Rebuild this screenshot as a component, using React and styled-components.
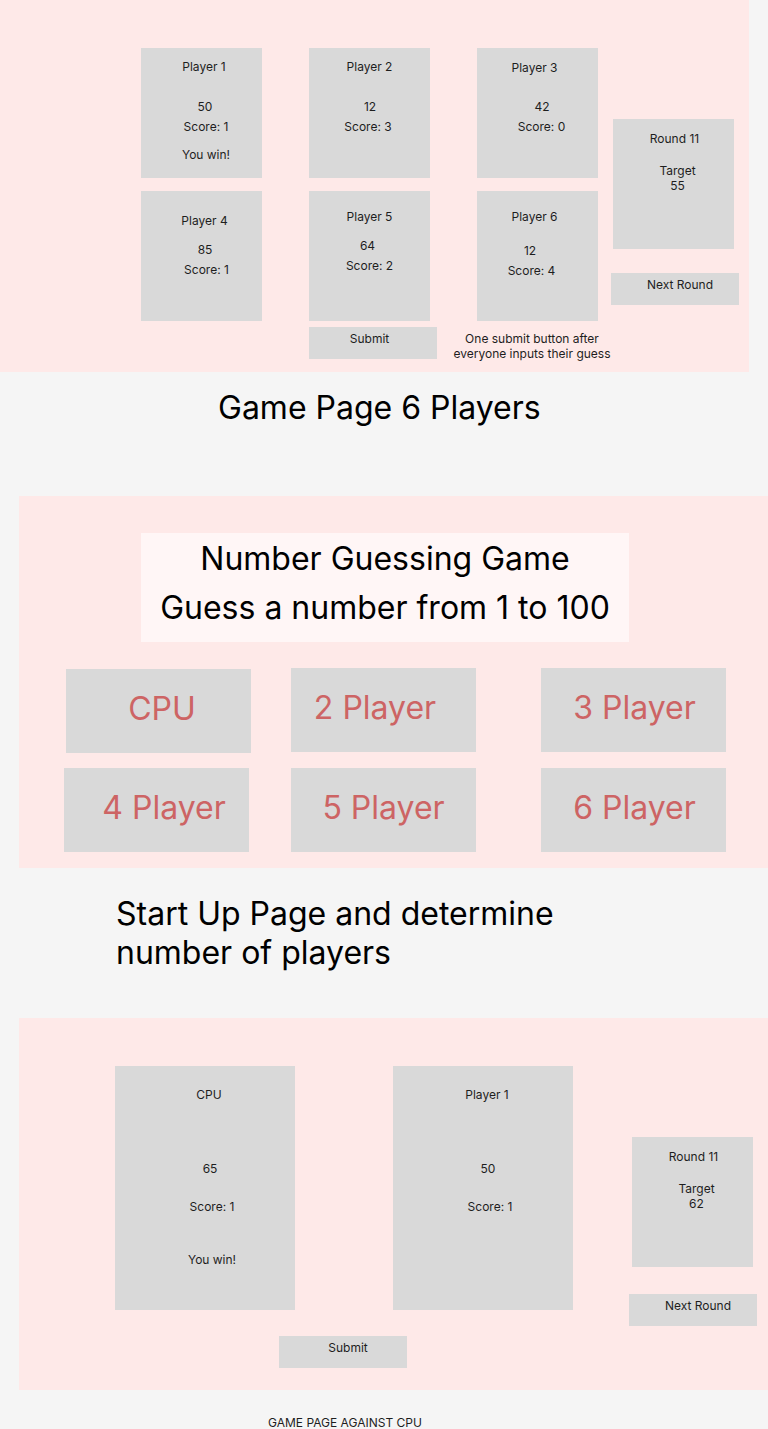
import React from "react";
import styled, { createGlobalStyle } from "styled-components";

const Global = createGlobalStyle`
  html, body { margin: 0; padding: 0; }
  body {
    background: #f5f5f5;
    font-family: Inter, "Noto Sans", sans-serif;
    color: #1e1e1e;
    overflow-x: hidden;
  }
`;

const shiftPad = (dx) =>
  `${dx < 0 ? -dx * 2 : 0}px 0 ${dx > 0 ? dx * 2 : 0}px`;

const Canvas = styled.div`
  width: 768px;
  display: flex;
  flex-direction: column;
`;

const Frame = styled.section`
  box-sizing: border-box;
  width: 749px;
  height: 372px;
  margin: ${(p) => p.$mt || 0}px 0 0 ${(p) => p.$ml || 0}px;
  background: #fee9e8;
  display: flex;
  flex-direction: ${(p) => p.$dir || "row"};
  align-items: flex-start;
  padding: ${(p) => p.$pad};
`;

const Caption = styled.h2`
  margin: ${(p) => p.$mt}px 0 0 ${(p) => p.$ml}px;
  font-weight: 400;
  font-size: 32px;
  line-height: 39px;
  color: #000;
`;

const SmallCaption = styled.div`
  margin: ${(p) => p.$mt}px 0 0 ${(p) => p.$ml}px;
  font-size: 12px;
  line-height: 15px;
  color: #1e1e1e;
  text-transform: uppercase;
  white-space: nowrap;
`;

const Board = styled.div`
  width: 457px;
  flex-shrink: 0;
  display: flex;
  flex-direction: column;
`;

const CardRow = styled.div`
  display: flex;
  gap: 47px;
  margin-top: ${(p) => p.$mt || 0}px;
`;

const FooterRow = styled.div`
  display: flex;
  align-items: flex-start;
  margin-top: ${(p) => p.$mt || 0}px;
`;

const Side = styled.div`
  display: flex;
  flex-direction: column;
  align-items: flex-start;
  margin-left: ${(p) => p.$ml}px;
`;

const Card = styled.div`
  box-sizing: border-box;
  width: ${(p) => p.$w}px;
  height: ${(p) => p.$h}px;
  margin-top: ${(p) => p.$mt || 0}px;
  margin-left: ${(p) => p.$ml || 0}px;
  flex-shrink: 0;
  background: #d9d9d9;
  display: flex;
  flex-direction: column;
  align-items: center;
`;

const Line = styled.div`
  font-size: 12px;
  line-height: 15px;
  white-space: nowrap;
  margin-top: ${(p) => p.$mt}px;
  margin-left: ${(p) => p.$dx * 2}px;
`;

const ActionButton = styled.button`
  box-sizing: border-box;
  width: 128px;
  height: 32px;
  margin: ${(p) => p.$mt || 0}px 0 0 ${(p) => p.$ml || 0}px;
  padding: 4px ${(p) => shiftPad(p.$dx)};
  border: none;
  border-radius: 0;
  background: #d9d9d9;
  font-family: inherit;
  font-size: 12px;
  line-height: 15px;
  color: #1e1e1e;
  display: flex;
  justify-content: center;
  align-items: flex-start;
  flex-shrink: 0;
  white-space: nowrap;
`;

const Note = styled.div`
  width: 170px;
  flex-shrink: 0;
  margin-left: ${(p) => p.$ml}px;
  padding-top: 4px;
  font-size: 12px;
  line-height: 15px;
  text-align: center;
  color: #1e1e1e;
  white-space: nowrap;
`;

const TitleBox = styled.div`
  box-sizing: border-box;
  width: 488px;
  height: 109px;
  margin: 37px 0 0 122px;
  padding-top: 1px;
  background: #fff6f6;
  font-size: 32px;
  line-height: 49px;
  text-align: center;
  color: #000;
`;

const ChoiceRow = styled.div`
  display: flex;
  align-items: flex-start;
  margin-top: ${(p) => p.$mt}px;
`;

const Choice = styled.button`
  box-sizing: border-box;
  width: 185px;
  height: 84px;
  margin: ${(p) => p.$mt || 0}px 0 0 ${(p) => p.$ml}px;
  padding: 0 ${(p) => shiftPad(p.$dx)};
  padding-bottom: 5px;
  border: none;
  border-radius: 0;
  background: #d9d9d9;
  font-family: inherit;
  font-size: 32px;
  color: #cd6464;
  display: flex;
  align-items: center;
  justify-content: center;
  white-space: nowrap;
  flex-shrink: 0;
`;

const TopRow = styled.div`
  display: flex;
  align-items: flex-start;
`;

function Lines({ items }) {
  let prev = null;
  return items.map(([text, y, dx], i) => {
    const mt = prev === null ? y - 7.5 : y - prev - 15;
    prev = y;
    return (
      <Line key={i} $mt={mt} $dx={dx}>
        {text}
      </Line>
    );
  });
}

const rowOne = [
  [["Player 1", 18.7, 2.5], ["50", 58.7, 3.5], ["Score: 1", 78.7, 4.5], ["You win!", 107, 4.5]],
  [["Player 2", 18.7, 0], ["12", 58.7, 0.5], ["Score: 3", 78.7, -1.5]],
  [["Player 3", 19.7, -3], ["42", 59, 4.5], ["Score: 0", 79, 4]],
];

const rowTwo = [
  [["Player 4", 29.7, 3], ["85", 58.3, 3.5], ["Score: 1", 78.3, 5]],
  [["Player 5", 25.7, 0], ["64", 54.7, -2], ["Score: 2", 74.3, 0]],
  [["Player 6", 25.7, -3], ["12", 59.7, -7.5], ["Score: 4", 79.7, -6]],
];

const roundOne = [["Round 11", 19.7, 1], ["Target", 51.7, 4], ["55", 66.5, 4]];
const roundTwo = [["Round 11", 19.7, 1], ["Target", 52, 4], ["62", 67, 4]];

const cpuLines = [["CPU", 28.3, 4], ["65", 103, 5], ["Score: 1", 140.7, 7], ["You win!", 193.3, 7]];
const p1Lines = [["Player 1", 28.3, 4], ["50", 103, 5], ["Score: 1", 140.7, 7]];

export default function App() {
  return (
    <>
      <Global />
      <Canvas>
        <Frame $pad="48px 0 0 141px">
          <Board>
            <CardRow>
              {rowOne.map((l, i) => (
                <Card key={i} $w={121} $h={130}>
                  <Lines items={l} />
                </Card>
              ))}
            </CardRow>
            <CardRow $mt={13}>
              {rowTwo.map((l, i) => (
                <Card key={i} $w={121} $h={130}>
                  <Lines items={l} />
                </Card>
              ))}
            </CardRow>
            <FooterRow $mt={6}>
              <ActionButton $ml={168} $dx={-3.5}>Submit</ActionButton>
              <Note $ml={10}>
                One submit button after
                <br />
                everyone inputs their guess
              </Note>
            </FooterRow>
          </Board>
          <Side $ml={13}>
            <Card $w={121} $h={130} $mt={71} $ml={2}>
              <Lines items={roundOne} />
            </Card>
            <ActionButton $mt={24} $dx={5}>Next Round</ActionButton>
          </Side>
        </Frame>

        <Caption $mt={16} $ml={218}>Game Page 6 Players</Caption>

        <Frame $ml={19} $mt={69} $dir="column" $pad="0">
          <TitleBox>
            Number Guessing Game
            <br />
            Guess a number from 1 to 100
          </TitleBox>
          <ChoiceRow $mt={26}>
            <Choice $ml={47} $mt={1} $dx={3.5}>CPU</Choice>
            <Choice $ml={40} $dx={-8.5}>2 Player</Choice>
            <Choice $ml={65} $dx={1}>3 Player</Choice>
          </ChoiceRow>
          <ChoiceRow $mt={15}>
            <Choice $ml={45} $dx={7.5}>4 Player</Choice>
            <Choice $ml={42} $dx={0}>5 Player</Choice>
            <Choice $ml={65} $dx={1}>6 Player</Choice>
          </ChoiceRow>
        </Frame>

        <Caption $mt={26} $ml={116}>
          Start Up Page and determine
          <br />
          number of players
        </Caption>

        <Frame $ml={19} $mt={46} $dir="column" $pad="48px 0 0 96px">
          <TopRow>
            <Card $w={180} $h={244}>
              <Lines items={cpuLines} />
            </Card>
            <Card $w={180} $h={244} $ml={98}>
              <Lines items={p1Lines} />
            </Card>
            <Side $ml={56}>
              <Card $w={121} $h={130} $mt={71} $ml={3}>
                <Lines items={roundTwo} />
              </Card>
              <ActionButton $mt={27} $dx={5}>Next Round</ActionButton>
            </Side>
          </TopRow>
          <ActionButton $mt={10} $ml={164} $dx={5}>Submit</ActionButton>
        </Frame>

        <SmallCaption $mt={25} $ml={268}>Game Page Against CPU</SmallCaption>
      </Canvas>
    </>
  );
}
